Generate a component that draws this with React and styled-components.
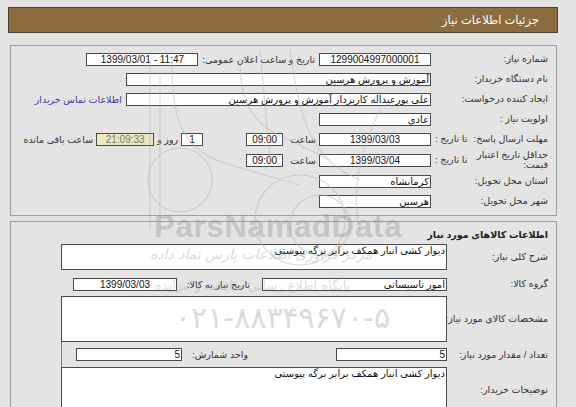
import styled, { createGlobalStyle } from "styled-components";

const GlobalStyle = createGlobalStyle`
  html, body {
    margin: 0;
    padding: 0;
    background: #e3e3e3;
  }
  body {
    font-family: "Liberation Sans", "DejaVu Sans", sans-serif;
    font-size: 9.5px;
    color: #333;
  }
`

const Page = styled.div`
  position: relative;
  width: 550px;
  padding: 7px 18px 0 8px;
  direction: rtl;
  overflow: hidden;
  height: 400px;
`

const Header = styled.div`
  height: 26px;
  box-sizing: border-box;
  background: #8c6c3f;
  border: 1px solid #4f4130;
  color: #fff;
  font-size: 11.5px;
  display: flex;
  align-items: center;
  padding-right: 18px;
`

const Panel = styled.div`
  margin: ${p => p.$top}px 1px 0 2px;
  border: 1px solid #9f9f9f;
  background: #e4e4e4;
  padding: ${p => p.$pad};
`

const Row = styled.div`
  display: grid;
  grid-template-columns: ${p => p.$cols};
  height: ${p => p.$h || 20}px;
  align-items: center;
  margin-top: ${p => p.$mt || 0}px;
`

const LabelCell = styled.div`
  display: flex;
  align-items: center;
  justify-content: space-between;
  padding-left: 4px;
  white-space: nowrap;
`

const Label = styled.span`
  color: #333;
  line-height: 10px;
  white-space: ${p => (p.$wrap ? "normal" : "nowrap")};
  width: ${p => p.$w || "auto"};
`

const Title = styled.span`
  font-weight: bold;
  color: #222;
`

const Content = styled.div`
  display: flex;
  align-items: center;
  gap: ${p => p.$gap || 4}px;
  height: 100%;
`

const Input = styled.div`
  box-sizing: border-box;
  width: ${p => p.$w}px;
  height: ${p => p.$h || 13}px;
  background: ${p => p.$bg || "#fff"};
  border: 1px solid #4a4a4a;
  color: ${p => p.$color || "#111"};
  font-size: 10px;
  line-height: 11px;
  text-align: ${p => (p.$center ? "center" : "right")};
  direction: ${p => (p.$center ? "ltr" : "rtl")};
  padding: 0 1px;
  white-space: nowrap;
  overflow: hidden;
  flex-shrink: 0;
`

const Text = styled.span`
  white-space: nowrap;
  color: ${p => p.$color || "#333"};
  margin-left: ${p => p.$ml || 0}px;
`

const Link = styled.span`
  color: #3b3ba6;
  white-space: nowrap;
`

const SubGrid = styled.div`
  display: grid;
  grid-template-columns: ${p => p.$first}px 1fr ${p => p.$last}px;
  align-items: center;
  padding-left: ${p => p.$pl}px;
  height: 100%;
  border-left: ${p => (p.$line ? "1px solid #7a7a7a" : "none")};
`

const SubLabel = styled.span`
  padding-right: ${p => p.$pr}px;
  white-space: nowrap;
`

const Watermark = styled.div`
  position: absolute;
  inset: 0;
  pointer-events: none;
  direction: ltr;
`

const Mark = styled.div`
  position: absolute;
  left: ${p => p.$x}px;
  top: ${p => p.$y}px;
  font-family: ${p => p.$font || "\"DejaVu Sans\", sans-serif"};
  font-size: ${p => p.$size}px;
  font-weight: ${p => p.$weight || "normal"};
  font-style: ${p => (p.$italic ? "italic" : "normal")};
  letter-spacing: ${p => p.$ls || 0}px;
  color: #9a9a9a;
  opacity: ${p => p.$op || 0.35};
  white-space: nowrap;
  direction: rtl;
`

const Logo = styled.svg`
  position: absolute;
  left: 0;
  top: 0;
  opacity: 0.5;
`

function Panel1() {
  const cols = "117px 1fr"
  return (
    <Panel $top={12} $pad="3px 8px 4px 0">
      <Row $cols={cols}>
        <LabelCell><Label>شماره نیاز:</Label></LabelCell>
        <Content $gap={4}>
          <Input $w={112} $center>1299004997000001</Input>
          <Text>تاریخ و ساعت اعلان عمومی:</Text>
          <Input $w={112} $center>1399/03/01 - 11:47</Input>
        </Content>
      </Row>
      <Row $cols={cols}>
        <LabelCell><Label>نام دستگاه خریدار:</Label></LabelCell>
        <Content>
          <Input $w={305}>آموزش و پرورش هرسین</Input>
        </Content>
      </Row>
      <Row $cols={cols}>
        <LabelCell><Label>ایجاد کننده درخواست:</Label></LabelCell>
        <Content>
          <Input $w={305}>علی پورعبداله کاربردار آموزش و پرورش هرسین</Input>
          <Link>اطلاعات تماس خریدار</Link>
        </Content>
      </Row>
      <Row $cols={cols}>
        <LabelCell><Label>اولویت نیاز :</Label></LabelCell>
        <Content>
          <Input $w={112}>عادی</Input>
        </Content>
      </Row>
      <Row $cols={cols}>
        <LabelCell>
          <Label>مهلت ارسال پاسخ:</Label>
          <Label>تا تاریخ :</Label>
        </LabelCell>
        <Content $gap={3}>
          <Input $w={112} $center>1399/03/03</Input>
          <Text $ml={4}>ساعت</Text>
          <Input $w={37} $center>09:00</Input>
          <Input $w={22} $center style={{ marginRight: 40 }}>1</Input>
          <Text>روز و</Text>
          <Input $w={58} $center $bg="#ebe9bd" $color="#7a7a6a">21:09:33</Input>
          <Text>ساعت باقی مانده</Text>
        </Content>
      </Row>
      <Row $cols={cols} $h={22}>
        <LabelCell>
          <Label $wrap $w="80px">حداقل تاریخ اعتبار قیمت:</Label>
          <Label>تا تاریخ :</Label>
        </LabelCell>
        <Content $gap={3}>
          <Input $w={112} $center>1399/03/04</Input>
          <Text $ml={4}>ساعت</Text>
          <Input $w={37} $center>09:00</Input>
        </Content>
      </Row>
      <Row $cols={cols}>
        <LabelCell><Label>استان محل تحویل:</Label></LabelCell>
        <Content>
          <Input $w={112}>کرمانشاه</Input>
        </Content>
      </Row>
      <Row $cols={cols}>
        <LabelCell><Label>شهر محل تحویل:</Label></LabelCell>
        <Content>
          <Input $w={112}>هرسین</Input>
        </Content>
      </Row>
    </Panel>
  )
}

function Panel2() {
  const cols = "101px 386px"
  return (
    <Panel $top={5} $pad="2px 8px 0 0">
      <Row $cols="1fr" $h={20}>
        <Title>اطلاعات کالاهای مورد نیاز</Title>
      </Row>
      <Row $cols={cols} $h={26}>
        <LabelCell><Label>شرح کلی نیاز:</Label></LabelCell>
        <Input $w={386} $h={26}>دیوار کشی انبار همکف برابر برگه پیوستی</Input>
      </Row>
      <Row $cols={cols} $h={14} $mt={7}>
        <LabelCell><Label>گروه کالا:</Label></LabelCell>
        <SubGrid $first={185} $last={104} $pl={12}>
          <Input $w={185}>امور تاسیساتی</Input>
          <SubLabel $pr={12}>تاریخ نیاز به کالا:</SubLabel>
          <Input $w={104} $center>1399/03/03</Input>
        </SubGrid>
      </Row>
      <Row $cols={cols} $h={46} $mt={5}>
        <LabelCell><Label>مشخصات کالای مورد نیاز:</Label></LabelCell>
        <Input $w={386} $h={46} />
      </Row>
      <Row $cols={cols} $h={25}>
        <LabelCell><Label>تعداد / مقدار مورد نیاز:</Label></LabelCell>
        <SubGrid $first={111} $last={106} $pl={14} $line>
          <Input $w={111}>5</Input>
          <SubLabel $pr={88}>واحد شمارش:</SubLabel>
          <Input $w={106}>5</Input>
        </SubGrid>
      </Row>
      <Row $cols={cols} $h={46}>
        <LabelCell><Label>توضیحات خریدار:</Label></LabelCell>
        <Input $w={386} $h={46}>دیوار کشی انبار همکف برابر برگه پیوستی</Input>
      </Row>
    </Panel>
  )
}

function App() {
  return (
    <>
      <GlobalStyle />
      <Page>
        <Header>جزئیات اطلاعات نیاز</Header>
        <Panel1 />
        <Panel2 />
        <Watermark>
          <Logo width="576" height="407" viewBox="0 0 576 407">
            <g fill="none" stroke="#b8b8b8" strokeWidth="1.2">
              <path d="M150 60 L150 230" />
              <path d="M160 70 L160 230" />
              <path d="M172 60 C172 120 180 150 230 165 L300 185" />
              <path d="M240 60 C240 100 250 125 290 140 L330 160" />
              <circle cx="180" cy="180" r="32" />
              <circle cx="300" cy="220" r="45" />
              <circle cx="320" cy="225" r="30" />
              <path d="M260 50 L270 160" />
              <path d="M290 50 C300 120 310 160 360 180" />
              <path d="M380 110 C360 150 350 190 360 230" />
            </g>
          </Logo>
          <Mark $x={154} $y={209} $size={31} $weight="bold" $ls={0.8} $font={"\"Liberation Sans\", sans-serif"} $op={0.4}>ParsNamadData</Mark>
          <Mark $x={150} $y={246} $size={14} $italic $op={0.35}>مرکز فراوری اطلاعات پارس نماد داده</Mark>
          <Mark $x={155} $y={278} $size={13} $op={0.3}>پایگاه اطلاع رسانی مناقصه و مزایده</Mark>
          <Mark $x={175} $y={300} $size={30} $op={0.35}>۰۲۱-۸۸۳۴۹۶۷۰-۵</Mark>
        </Watermark>
      </Page>
    </>
  )
}

export default App;
